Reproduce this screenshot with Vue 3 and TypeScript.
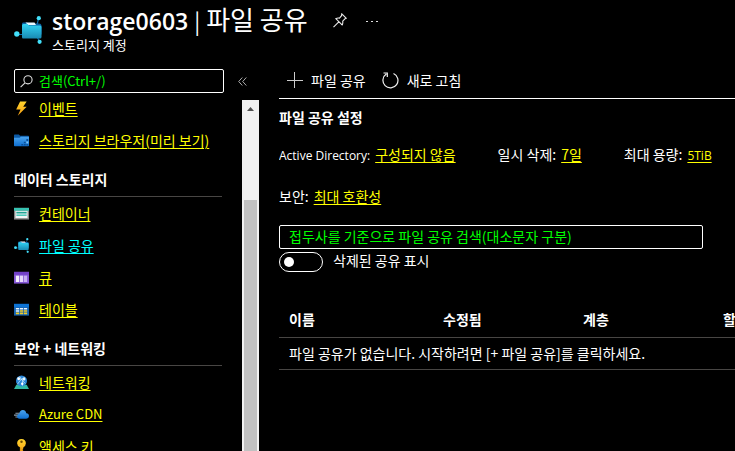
<script setup lang="ts">
import { ref } from 'vue'

interface NavItem {
  icon: string
  label: string
  active?: boolean
  latin?: boolean
}
interface NavGroup {
  title?: string
  items: NavItem[]
}

const groups: NavGroup[] = [
  {
    items: [
      { icon: 'bolt', label: '이벤트' },
      { icon: 'folder', label: '스토리지 브라우저(미리 보기)' },
    ],
  },
  {
    title: '데이터 스토리지',
    items: [
      { icon: 'container', label: '컨테이너' },
      { icon: 'share', label: '파일 공유', active: true },
      { icon: 'queue', label: '큐' },
      { icon: 'table', label: '테이블' },
    ],
  },
  {
    title: '보안 + 네트워킹',
    items: [
      { icon: 'network', label: '네트워킹' },
      { icon: 'cdn', label: 'Azure CDN', latin: true },
      { icon: 'key', label: '액세스 키' },
    ],
  },
]

const settings = [
  { name: 'Active Directory:', value: '구성되지 않음', latinName: true },
  { name: '일시 삭제:', value: '7일' },
  { name: '최대 용량:', value: '5TiB', latinValue: true },
  { name: '보안:', value: '최대 호환성' },
]

const columns = ['이름', '수정됨', '계층', '할당량']
const menuFilter = ref('')
const shareFilter = ref('')
const showDeleted = ref(false)
</script>

<template>
  <div class="page">
    <svg class="defs" width="0" height="0" aria-hidden="true">
      <defs>
        <linearGradient id="cyan" x1="0" y1="0" x2="0" y2="1">
          <stop offset="0" stop-color="#32d4f5" />
          <stop offset="1" stop-color="#198ab3" />
        </linearGradient>
        <linearGradient id="blue" x1="0" y1="0" x2="0" y2="1">
          <stop offset="0" stop-color="#4aa3ee" />
          <stop offset="1" stop-color="#0f6fd0" />
        </linearGradient>
        <linearGradient id="gold" x1="0" y1="0" x2="0" y2="1">
          <stop offset="0" stop-color="#ffd52e" />
          <stop offset="1" stop-color="#f59b12" />
        </linearGradient>
        <symbol id="i-share" viewBox="0 0 28 28">
          <path d="M24.5 2.5 23 9M3 18.500h6M26 26l-3-5" stroke="#0f6cae" stroke-width="1.200" fill="none" />
          <path d="M8 8q0-1.500 1-1.500h4l2 1h10q2.500 0 2.500 2v9H8z" fill="#0b5fa0" />
          <path d="M11.500 6.500h9l1.500 2.500h-8z" fill="#eaf7ff" />
          <path d="M8 9.500q0-1.500 1.500-1.500h4l1.500 1.500h11q1.500 0 1.500 1.500v10q0 1.500-1.500 1.500h-17Q8 22.500 8 21z" fill="url(#cyan)" />
          <circle cx="2.800" cy="18" r="2.700" fill="#42dff9" />
          <circle cx="24.800" cy="2.200" r="2.100" fill="#42dff9" />
          <circle cx="25.600" cy="25.800" r="2.100" fill="#42dff9" />
        </symbol>
        <symbol id="i-bolt" viewBox="0 0 16 16">
          <path d="M6.500.5H13.500L9.800 6H13.500L4 15.800 7 9H2.300z" fill="url(#gold)" />
        </symbol>
        <symbol id="i-folder" viewBox="0 0 16 16">
          <path d="M0 2.500q0-.8.8-.8h4.400l1.300 1.300H15q1 0 1 1V8H0z" fill="#0c59a4" />
          <path d="M0 5h6l1.400-1H16v9.200q0 .8-.8.8H.8q-.8 0-.8-.8z" fill="url(#blue)" />
          <path d="M13.200 6.500h2v2h-2zM10.500 9.200h2v1.800h-2zM7.800 11.700h2v1.700h-2zM10.500 11.700h2v1.700h-2zM13.200 11.700h2v1.700h-2z" fill="#0a4f97" />
          <path d="M13.200 9.200h2v1.800h-2z" fill="#7fc4f5" />
        </symbol>
        <symbol id="i-container" viewBox="0 0 16 16">
          <path d="M0 2h16v12.500H0z" fill="#858585" />
          <path d="M1.500 5h13v8h-13z" fill="#f3f5f5" />
          <path d="M0 2h16v3H0z" fill="#37c2b1" />
          <path d="M2.500 6.200h11v1.800h-11z" fill="#21a394" />
          <path d="M2.500 9h11v1.600h-11z" fill="#42c7b7" />
        </symbol>
        <symbol id="i-queue" viewBox="0 0 16 16">
          <path d="M0 2h16v12.500H0z" fill="#8355d4" />
          <path d="M0 2h16v3H0z" fill="#7240c8" />
          <path d="M2 6h3.600v6.800H2z" fill="#f5effe" />
          <path d="M6.400 6h3.300v6.800H6.400z" fill="#e5d8fb" />
          <path d="M10.500 6H14v6.800h-3.500z" fill="#c7aff3" />
        </symbol>
        <symbol id="i-table" viewBox="0 0 16 16">
          <path d="M0 2h16v12.500H0z" fill="#1464b4" />
          <path d="M0 2h16v3.500H0z" fill="#0d73d4" />
          <path d="M2 6.500h3.500v1.600H2zM6.300 6.500h3.500v1.600H6.300zM10.600 6.500H14v1.600h-3.400zM2 8.800h3.500v1.600H2z" fill="#e9f4fc" />
          <path d="M6.300 8.800h3.500v1.600H6.300zM10.600 8.800H14v1.600h-3.400zM2 11.200h3.500v1.800H2zM6.300 11.200h3.500v1.800H6.300zM10.600 11.200H14v1.800h-3.400z" fill="#f2cb25" />
        </symbol>
        <symbol id="i-network" viewBox="0 0 16 16">
          <path d="M2.500 10.500h11l2.500 4.500H0z" fill="#32b8a3" />
          <circle cx="8" cy="6.300" r="5.900" fill="#2b87d8" />
          <path d="M4 3q4 .5 8 6M11.500 2.500Q6 5 3.500 10M6 1.500q4.500 4 3 10" stroke="#bfe5fb" stroke-width=".8" fill="none" />
          <circle cx="5" cy="4" r="1.500" fill="#fff" />
          <circle cx="10.600" cy="4.300" r="1.600" fill="#e4f6ff" />
          <circle cx="8.800" cy="9.300" r="1.300" fill="#fff" />
        </symbol>
        <symbol id="i-cdn" viewBox="0 0 16 16">
          <path d="M1.500 6h5v1.200h-5zM0 8h6v1.200H0zM1.500 10h5v1.200h-5z" fill="#8fa1b3" />
          <path d="M6 12.500Q3.200 12.300 3.300 9.800 3.500 7.700 5.600 7.300 6.300 3.300 9.400 3.300q2.900 0 3.700 3.400 2.900.3 2.900 3.100-.1 2.600-2.900 2.700z" fill="url(#blue)" />
        </symbol>
        <symbol id="i-key" viewBox="0 0 16 16">
          <path d="M8 0q4.500.3 4.700 4.500-.1 2.800-2.700 4.200v1.100l-1 1 1 1-1 1.100 1 1L8 16l-1.700-1.500V8.700Q3.400 7.500 3.300 4.500 3.500.3 8 0" fill="url(#gold)" />
          <circle cx="8" cy="2.900" r="1.300" fill="#6d4b00" />
          <path d="M7.300 9v5" stroke="#c88204" stroke-width=".8" />
        </symbol>
      </defs>
    </svg>

    <header class="header">
      <svg class="resource-icon"><use href="#i-share" /></svg>
      <div>
        <div class="title-row">
          <h1><strong>storage0603</strong><span class="bar">|</span>파일 공유</h1>
          <button class="plain" type="button" aria-label="고정">
            <svg width="14" height="15" viewBox="0 0 14 15" fill="none" stroke="#e8e8e8" stroke-width="1.100">
              <path d="M8.800.8l4.500 4.500-1.300.5-2.300 2.400q.4 2.300-.6 3.800L2.800 5.700q1.500-1 3.700-.6L8.500 2.700zM5.800 8.800.5 14.200" />
            </svg>
          </button>
          <button class="plain more" type="button" aria-label="더 보기">
            <svg width="12" height="4" viewBox="0 0 12 4" fill="#ddd">
              <path d="M0 3h2v1H0zM5 3h2v1H5zM10 3h2v1h-2z" />
            </svg>
          </button>
        </div>
        <p class="subtitle">스토리지 계정</p>
      </div>
    </header>

    <div class="body">
      <aside class="sidebar">
        <div class="search-row">
          <label class="search">
            <svg width="13" height="13" viewBox="0 0 13 13" fill="none" stroke="#ddd" stroke-width="1.100">
              <circle cx="8" cy="4.800" r="4.100" />
              <path d="M5 7.800.6 12.200" />
            </svg>
            <input v-model="menuFilter" type="text" placeholder="검색(Ctrl+/)" aria-label="검색(Ctrl+/)" />
          </label>
          <button class="plain" type="button" aria-label="축소">
            <svg width="9" height="9" viewBox="0 0 9 9" fill="none" stroke="#aaa">
              <path d="M4.300.5l-3.600 4 3.600 4M8.300.5l-3.600 4 3.600 4" />
            </svg>
          </button>
        </div>
        <div class="scroll-area">
          <nav class="nav">
            <section v-for="(group, i) in groups" :key="i">
              <h2 v-if="group.title">{{ group.title }}</h2>
              <ul>
                <li v-for="item in group.items" :key="item.label">
                  <svg class="nav-icon"><use :href="'#i-' + item.icon" /></svg>
                  <a href="#" :class="{ active: item.active, latin: item.latin }">{{ item.label }}</a>
                </li>
              </ul>
            </section>
          </nav>
          <div class="scrollbar" aria-hidden="true">
            <svg class="arrow" width="17" height="17" viewBox="0 0 17 17"><path d="M5 11l3.500-4 3.500 4z" fill="#505050" /></svg>
            <div class="track"></div>
            <div class="thumb"></div>
          </div>
        </div>
      </aside>

      <main class="main">
        <div class="toolbar">
          <button type="button">
            <svg width="16" height="16" viewBox="0 0 16 16" stroke="#ccc"><path d="M7.500 0v16M0 8.500h16" /></svg>
            파일 공유
          </button>
          <button type="button">
            <svg width="17" height="17" viewBox="0 0 17 17" fill="none" stroke="#f2f2f2" stroke-width="1.200">
              <path d="M11.500 1.500a7.500 7.500 0 1 1-7.200.6M1.500 1h3.800v4" />
            </svg>
            새로 고침
          </button>
        </div>

        <h3>파일 공유 설정</h3>
        <dl class="settings">
          <div v-for="s in settings" :key="s.name">
            <dt :class="{ compact: s.latinName }">{{ s.name }}</dt>
            <dd><a href="#" :class="{ compact: s.latinValue }">{{ s.value }}</a></dd>
          </div>
        </dl>

        <input
          v-model="shareFilter"
          class="share-filter"
          type="text"
          placeholder="접두사를 기준으로 파일 공유 검색(대소문자 구분)"
          aria-label="파일 공유 검색"
        />
        <label class="toggle">
          <input v-model="showDeleted" type="checkbox" role="switch" />
          <span>삭제된 공유 표시</span>
        </label>

        <table>
          <thead>
            <tr><th v-for="c in columns" :key="c" scope="col">{{ c }}</th></tr>
          </thead>
          <tbody>
            <tr><td :colspan="columns.length">파일 공유가 없습니다. 시작하려면 [+ 파일 공유]를 클릭하세요.</td></tr>
          </tbody>
        </table>
      </main>
    </div>
  </div>
</template>

<style>
body {
  background: #000;
}
</style>

<style scoped>
* {
  box-sizing: border-box;
}
.page {
  display: flex;
  flex-direction: column;
  height: 100vh;
  overflow: hidden;
  background: #000;
  color: #fff;
  font: 14px/20px 'Noto Sans CJK KR', sans-serif;
  white-space: nowrap;
}
.defs {
  position: absolute;
}
h1, h2, h3, p, ul, dl, dd {
  margin: 0;
  padding: 0;
  font-size: 14px;
}
a {
  color: #ff0;
  text-decoration: underline;
  text-underline-offset: 2px;
}
a.active {
  color: #0ff;
}
.latin {
  font-size: 13px;
}
.compact {
  font-family: 'Open Sans', 'Noto Sans CJK KR', sans-serif;
  font-size: 12px;
}
button {
  background: none;
  border: 0;
  padding: 0;
  color: inherit;
  font: inherit;
}
.plain {
  display: flex;
}
.header {
  display: flex;
  gap: 10px;
  height: 62px;
  padding: 4px 14px 0;
  flex: none;
}
.resource-icon {
  width: 28px;
  height: 28px;
  margin-top: 12px;
}
.title-row {
  display: flex;
  align-items: center;
  height: 32px;
}
h1 {
  font-size: 26px;
  font-weight: 400;
  line-height: 32px;
  margin-right: 25px;
}
h1 strong {
  font: 600 23px/32px 'Open Sans', 'Noto Sans', sans-serif;
}
.bar {
  margin: 0 6px;
  font-size: 22px;
}
.more {
  margin-left: 19px;
}
.subtitle {
  font-size: 13px;
  line-height: 18px;
}
.body {
  display: flex;
  flex: 1;
  min-height: 0;
}
.sidebar {
  display: flex;
  flex-direction: column;
  flex: none;
  width: 259px;
}
.search-row {
  display: flex;
  align-items: center;
  gap: 14px;
  height: 38px;
  padding: 0 0 0 14px;
}
.search {
  display: flex;
  align-items: center;
  gap: 6px;
  width: 210px;
  height: 24px;
  padding: 0 5px;
  border: 1px solid #fff;
  border-radius: 2px;
}
.search input {
  flex: 1;
  min-width: 0;
  padding: 0;
  border: 0;
  outline: 0;
  background: none;
  color: #fff;
  font: inherit;
  font-size: 13px;
}
input::placeholder {
  color: #0f0;
  opacity: 1;
}
.scroll-area {
  display: flex;
  justify-content: space-between;
  flex: 1;
  min-height: 0;
  overflow: hidden;
}
.nav {
  width: 222px;
  margin-top: -8px;
  padding-left: 14px;
}
.nav h2 {
  height: 41px;
  padding-top: 13px;
  border-bottom: 1px solid #484644;
}
.nav ul {
  list-style: none;
}
.nav li {
  display: flex;
  align-items: center;
  gap: 10px;
  height: 32px;
}
.nav-icon {
  width: 15px;
  height: 15px;
  flex: none;
}
.scrollbar {
  display: flex;
  flex-direction: column;
  width: 17px;
  background: #f1f1f1;
}
.arrow {
  flex: none;
}
.track {
  flex: 83;
}
.thumb {
  flex: 251;
  margin: 0 2px;
  background: #c1c1c1;
}
.main {
  flex: 1;
  min-width: 0;
  margin-left: 20px;
  overflow: hidden;
}
.toolbar {
  display: flex;
  gap: 16px;
  height: 37px;
  padding-left: 8px;
  border-bottom: 1px solid #fff;
}
.toolbar button {
  display: flex;
  align-items: center;
  gap: 8px;
}
h3 {
  padding-top: 8px;
}
.settings {
  display: flex;
  flex-wrap: wrap;
  gap: 20px 42px;
  padding: 17px 0 19px;
}
.settings > div {
  display: flex;
  align-items: baseline;
  gap: 5px;
}
.share-filter {
  display: block;
  width: calc(100% - 32px);
  height: 24px;
  padding: 0 9px 2px;
  border: 1px solid #fff;
  border-radius: 2px;
  background: none;
  color: #fff;
  font: inherit;
}
.toggle {
  display: flex;
  align-items: center;
  gap: 10px;
  padding-top: 3px;
}
.toggle span {
  height: 20px;
  line-height: 16px;
}
.toggle input {
  appearance: none;
  display: flex;
  align-items: center;
  width: 44px;
  height: 20px;
  margin: 0;
  padding: 0 4px;
  border: 1px solid #fff;
  border-radius: 10px;
}
.toggle input::before {
  content: '';
  width: 10px;
  height: 10px;
  border-radius: 50%;
  background: #fff;
}
.toggle input:checked {
  justify-content: flex-end;
}
table {
  width: 100%;
  margin-top: 33px;
  table-layout: fixed;
  border-collapse: collapse;
}
th, td {
  height: 32px;
  padding: 0 0 0 10px;
  text-align: left;
  border-bottom: 1px solid #484644;
}
th {
  width: 140px;
  padding-bottom: 3px;
  overflow: hidden;
}
th:first-child {
  width: 154px;
}
th:last-child {
  width: auto;
}
</style>
